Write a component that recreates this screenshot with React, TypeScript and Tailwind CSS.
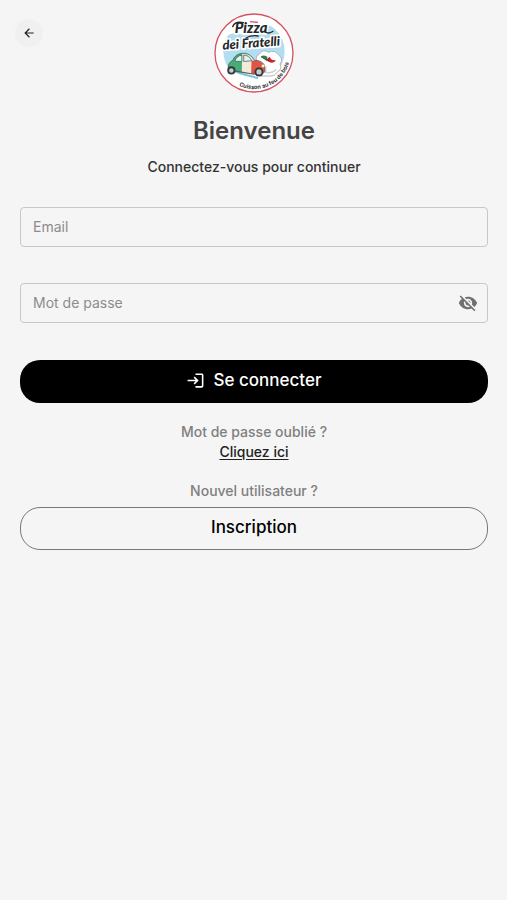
import React, { useState } from 'react';
import { MdArrowBack, MdLogin, MdVisibility, MdVisibilityOff } from 'react-icons/md';

const Logo: React.FC = () => (
  <svg viewBox="28 25 240 240" className="size-20" role="img" aria-label="Pizza dei Fratelli">
    <defs>
      <clipPath id="scene">
        <circle cx="148" cy="140" r="92" />
      </clipPath>
      <path id="tagline" d="M 103 243 A 108 108 0 0 0 252 113" />
    </defs>

    <circle cx="148" cy="145" r="117" fill="#fff" stroke="#d65261" strokeWidth="4" />

    {/* Sky and road */}
    <g clipPath="url(#scene)">
      <path d="M50 96 L92 84 L120 92 L190 62 L246 80 V212 H50 Z" fill="#b3def0" />
      <path d="M50 192 L170 212 L246 198 V240 H50 Z" fill="#fff" />
      <path d="M60 186 Q100 208 160 220" fill="none" stroke="#7bbfdc" strokeWidth="6" />
    </g>

    {/* Chef hat with the flag moustache */}
    <path
      d="M168 214 L162 178 Q146 158 164 148 Q174 132 192 143 Q210 134 221 150 Q238 162 226 178 Q234 194 216 204 Q210 216 190 214 Z"
      fill="#fff"
      stroke="#aeb6ba"
      strokeWidth="3"
    />
    <path d="M184 204 Q202 206 215 194 M183 184 L183 204" fill="none" stroke="#cfd3d6" strokeWidth="5" />
    <path d="M168 156 Q178 148 189 157 L187 168 Q176 160 168 156 Z" fill="#23864b" />
    <path d="M189 157 L200 160 L197 172 L187 168 Z" fill="#f7f7f7" />
    <path d="M195 156 Q200 169 214 166 Q208 178 193 172 Q187 168 183 167 Z" fill="#c9232f" />
    <path d="M169 156 Q184 168 194 168" fill="none" stroke="#333" strokeWidth="2" />

    {/* Car */}
    <g transform="translate(-14 -21) scale(1.12)">
      <path d="M76 190 Q74 174 88 168 Q94 151 113 149 L125 149 V203 L84 196 Z" fill="#47ad76" />
      <path d="M113 149 Q133 147 146 169 L144 204 L112 201 Z" fill="#f3ead9" />
      <path d="M138 169 Q160 165 172 180 L174 200 Q164 211 137 204 Z" fill="#df5443" />
      <path
        d="M93 170 Q99 155 112 154 V171 Z M117 154 Q130 153 139 169 L117 171 Z"
        fill="#dff2f6"
        stroke="#3f6256"
        strokeWidth="2"
      />
      <path
        d="M76 190 Q74 174 88 168 Q94 151 113 149 Q134 147 146 168 Q164 167 172 180 L174 198"
        fill="none"
        stroke="#365b4c"
        strokeWidth="2"
      />
      <path d="M91 196 L145 205" stroke="#52605b" strokeWidth="3" />
      <circle cx="84" cy="195" r="11" fill="#30383b" />
      <circle cx="84" cy="195" r="6" fill="#c5cccd" />
      <circle cx="158" cy="199" r="12" fill="#30383b" />
      <circle cx="158" cy="199" r="7" fill="#c5cccd" />
      <circle cx="169" cy="183" r="4" fill="#fff2ce" />
    </g>

    {/* Lettering */}
    <path d="M136 51 L160 53" stroke="#d65261" strokeWidth="4" />
    <g
      fill="#26282b"
      stroke="#fff"
      strokeWidth="10"
      strokeLinejoin="round"
      paintOrder="stroke"
      fontFamily="Lato, sans-serif"
      fontStyle="italic"
      fontWeight="900"
    >
      <text x="90" y="84" fontSize="44">Pizza</text>
      <text x="54" y="135" fontSize="39" transform="rotate(-4 54 135)">dei Fratelli</text>
    </g>
    <path
      d="M84 66 Q90 49 116 54 M184 83 Q194 88 205 80 M124 100 Q142 90 160 94"
      fill="none"
      stroke="#26282b"
      strokeWidth="4"
      strokeLinecap="round"
    />
    <text fill="#333" fontFamily="Inter, sans-serif" fontSize="17" fontWeight="700">
      <textPath href="#tagline">Cuisson au feu de bois</textPath>
    </text>
  </svg>
);

const inputClass =
  'h-10 w-full rounded-sm border border-[#c8c8c8] bg-transparent px-3 pb-0.5 text-sm text-[#333] outline-none placeholder:text-[#8c8c8c] placeholder:opacity-100 focus:border-black';

const App: React.FC = () => {
  const [showPassword, setShowPassword] = useState(false);

  return (
    <div className="min-h-screen bg-[#f5f5f5] font-[Inter,sans-serif]">
      <header className="grid grid-cols-[1fr_auto_1fr] pt-[13px]">
        <button
          type="button"
          aria-label="Retour"
          className="mt-1.5 ml-[15px] flex size-7 items-center justify-center rounded-full bg-[#f0f0f0] text-[#222]"
        >
          <MdArrowBack size={14} />
        </button>
        <Logo />
      </header>

      <main className="pt-[22px] pr-[19px] pl-5">
        <h1 className="text-center text-2xl leading-8 font-semibold text-[#444]">Bienvenue</h1>
        <p className="mt-2.5 text-center text-sm font-medium text-[#333]">Connectez-vous pour continuer</p>

        <form className="mt-[30px]" onSubmit={(e) => e.preventDefault()}>
          <input type="email" aria-label="Email" placeholder="Email" className={inputClass} />

          <div className="relative mt-9">
            <input
              type={showPassword ? 'text' : 'password'}
              aria-label="Mot de passe"
              placeholder="Mot de passe"
              className={inputClass}
            />
            <button
              type="button"
              aria-label="Afficher le mot de passe"
              onClick={() => setShowPassword((prev) => !prev)}
              className="absolute inset-y-0 right-2.5 flex items-center text-[#707070]"
            >
              {showPassword ? <MdVisibility size={20} /> : <MdVisibilityOff size={20} />}
            </button>
          </div>

          <button
            type="submit"
            className="mt-[37px] flex h-[43px] w-full items-center justify-center gap-2 rounded-[20px] bg-black pb-0.5 text-[17px] font-medium text-white"
          >
            <MdLogin size={19} />
            Se connecter
          </button>
        </form>

        <div className="mt-[19px] text-center text-sm font-medium text-[#808080]">
          <p>Mot de passe oublié ?</p>
          <a href="#" className="text-[#222] underline underline-offset-2">
            Cliquez ici
          </a>
          <p className="mt-[19px]">Nouvel utilisateur ?</p>
        </div>

        <button
          type="button"
          className="mt-1.5 h-[43px] w-full rounded-[20px] border border-[#777] pb-0.5 text-[17px] font-medium text-black"
        >
          Inscription
        </button>
      </main>
    </div>
  );
};

export default App;
